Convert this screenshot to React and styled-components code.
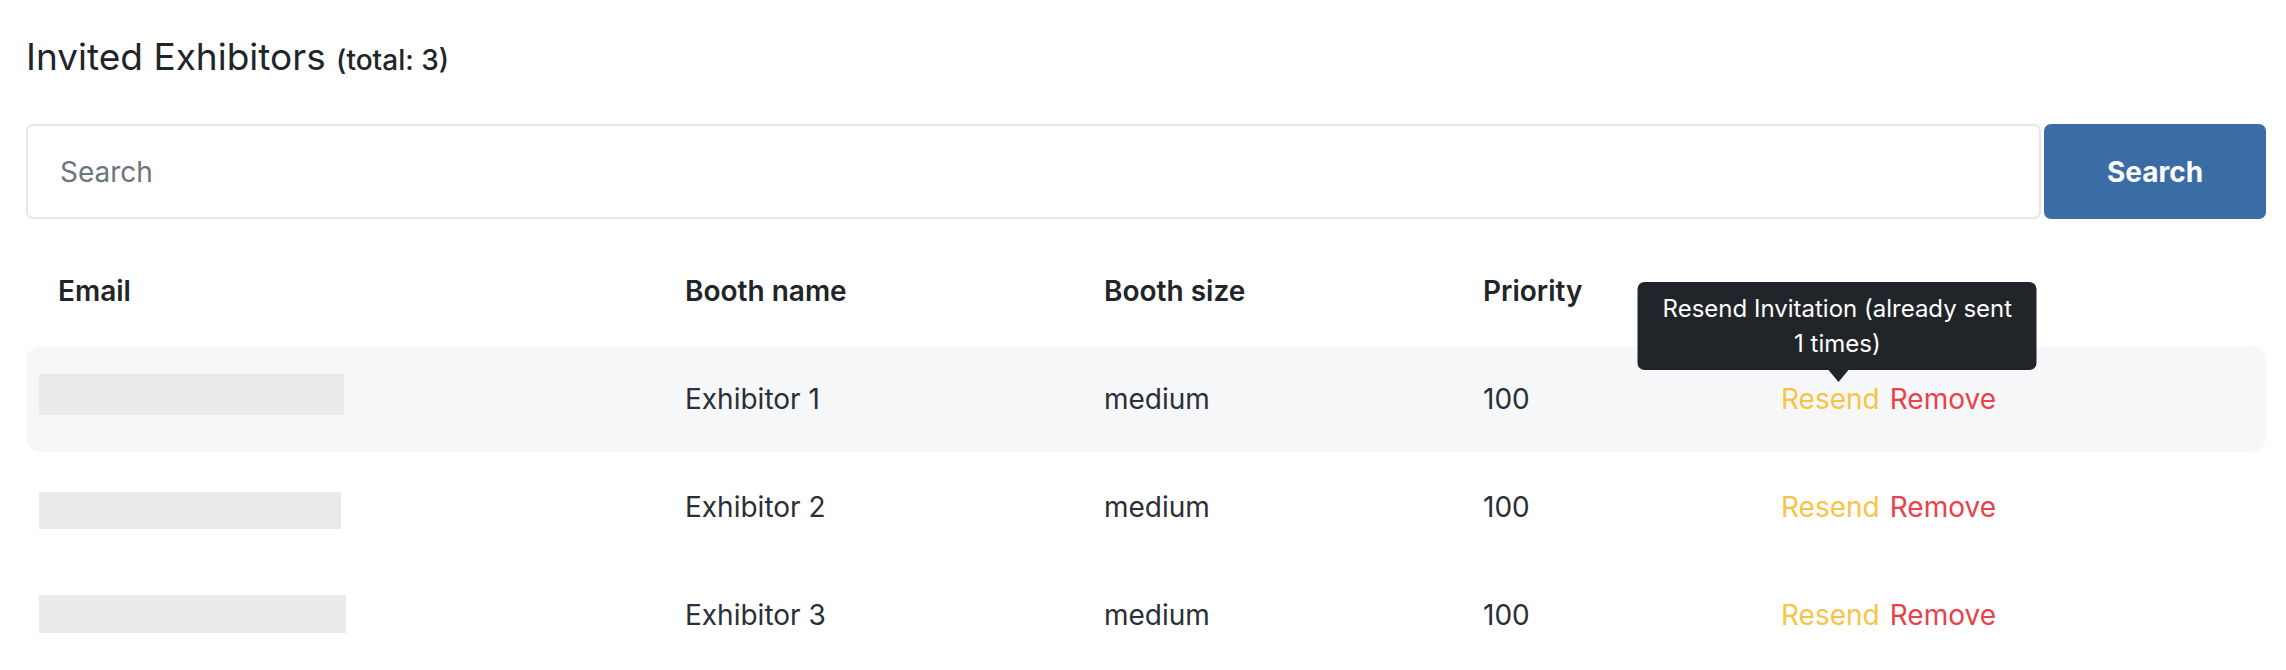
import styled, { createGlobalStyle } from "styled-components";

const GlobalStyle = createGlobalStyle`
  body {
    margin: 0;
    background: #ffffff;
    font-family: Inter, "Noto Sans", sans-serif;
    color: #212529;
  }
`;

const Page = styled.div`
  padding: 35px 20px 0 26px;
`;

const Title = styled.h2`
  margin: 0;
  font-size: 37px;
  font-weight: 400;
  line-height: 43px;
  color: #212529;

  small {
    font-size: 28px;
    font-weight: 500;
  }
`;

const SearchBar = styled.form`
  display: flex;
  gap: 3px;
  margin-top: 42px;
`;

const SearchInput = styled.input`
  flex: 1;
  height: 95px;
  box-sizing: border-box;
  border: 2px solid #e4e6ea;
  border-radius: 7px;
  padding: 0 32px;
  font-family: inherit;
  font-size: 28px;
  color: #212529;
  outline: none;

  &::placeholder {
    color: #6c757d;
  }
`;

const SearchButton = styled.button`
  width: 222px;
  height: 95px;
  border: none;
  border-radius: 7px;
  background: #3a6da5;
  color: #ffffff;
  font-family: inherit;
  font-size: 28px;
  font-weight: 700;
`;

const Table = styled.table`
  width: 100%;
  margin-top: 16px;
  border-collapse: separate;
  border-spacing: 0 2px;
  table-layout: fixed;
`;

const Th = styled.th`
  height: 107px;
  padding: 0 0 0 32px;
  text-align: left;
  font-size: 28px;
  font-weight: 600;
  color: #212529;
`;

const Row = styled.tr`
  background: ${(p) => (p.$active ? "#f6f7f9" : "transparent")};

  td:first-child {
    border-radius: 15px 0 0 15px;
  }
  td:last-child {
    border-radius: 0 15px 15px 0;
  }
`;

const Td = styled.td`
  height: 106px;
  padding: 0 0 0 ${(p) => (p.$tight ? "13px" : "32px")};
  font-size: 28px;
  color: #2b2f36;
  vertical-align: middle;
`;

const Redacted = styled.div`
  width: ${(p) => p.$w}px;
  height: ${(p) => p.$h}px;
  margin-top: ${(p) => p.$dy}px;
  background: #eaeaea;
`;

const Actions = styled.div`
  display: flex;
  gap: 10px;
`;

const LinkWrap = styled.span`
  position: relative;
  display: inline-block;
`;

const ActionLink = styled.a`
  color: ${(p) => p.$color};
  text-decoration: none;
  cursor: pointer;
`;

const Tooltip = styled.div`
  position: absolute;
  left: 50%;
  bottom: calc(100% + 12px);
  transform: translateX(calc(-50% + 7px));
  width: 399px;
  box-sizing: border-box;
  padding: 9px 18px;
  border-radius: 7px;
  background: #212529;
  color: #ffffff;
  font-size: 24px;
  line-height: 35px;
  text-align: center;

  &::after {
    content: "";
    position: absolute;
    top: 100%;
    left: 50%;
    margin-left: -9px;
    border-left: 10px solid transparent;
    border-right: 10px solid transparent;
    border-top: 12px solid #212529;
  }
`;

const rows = [
  { name: "Exhibitor 1", size: "medium", priority: 100, w: 305, h: 41, dy: -9, tip: true },
  { name: "Exhibitor 2", size: "medium", priority: 100, w: 302, h: 37, dy: 7 },
  { name: "Exhibitor 3", size: "medium", priority: 100, w: 307, h: 38, dy: -2 },
];

export default function App() {
  return (
    <>
      <GlobalStyle />
      <Page>
        <Title>
          Invited Exhibitors <small>(total: 3)</small>
        </Title>

        <SearchBar onSubmit={(e) => e.preventDefault()}>
          <SearchInput placeholder="Search" />
          <SearchButton type="submit">Search</SearchButton>
        </SearchBar>

        <Table>
          <colgroup>
            <col style={{ width: 627 }} />
            <col style={{ width: 419 }} />
            <col style={{ width: 379 }} />
            <col style={{ width: 298 }} />
            <col />
          </colgroup>
          <thead>
            <tr>
              <Th>Email</Th>
              <Th>Booth name</Th>
              <Th>Booth size</Th>
              <Th>Priority</Th>
              <Th />
            </tr>
          </thead>
          <tbody>
            {rows.map((r, i) => (
              <Row key={i} $active={r.tip}>
                <Td $tight>
                  <Redacted $w={r.w} $h={r.h} $dy={r.dy} />
                </Td>
                <Td>{r.name}</Td>
                <Td>{r.size}</Td>
                <Td>{r.priority}</Td>
                <Td>
                  <Actions>
                    <LinkWrap>
                      <ActionLink $color="#f8c445">Resend</ActionLink>
                      {r.tip && (
                        <Tooltip>Resend Invitation (already sent 1 times)</Tooltip>
                      )}
                    </LinkWrap>
                    <ActionLink $color="#e8424b">Remove</ActionLink>
                  </Actions>
                </Td>
              </Row>
            ))}
          </tbody>
        </Table>
      </Page>
    </>
  );
}
